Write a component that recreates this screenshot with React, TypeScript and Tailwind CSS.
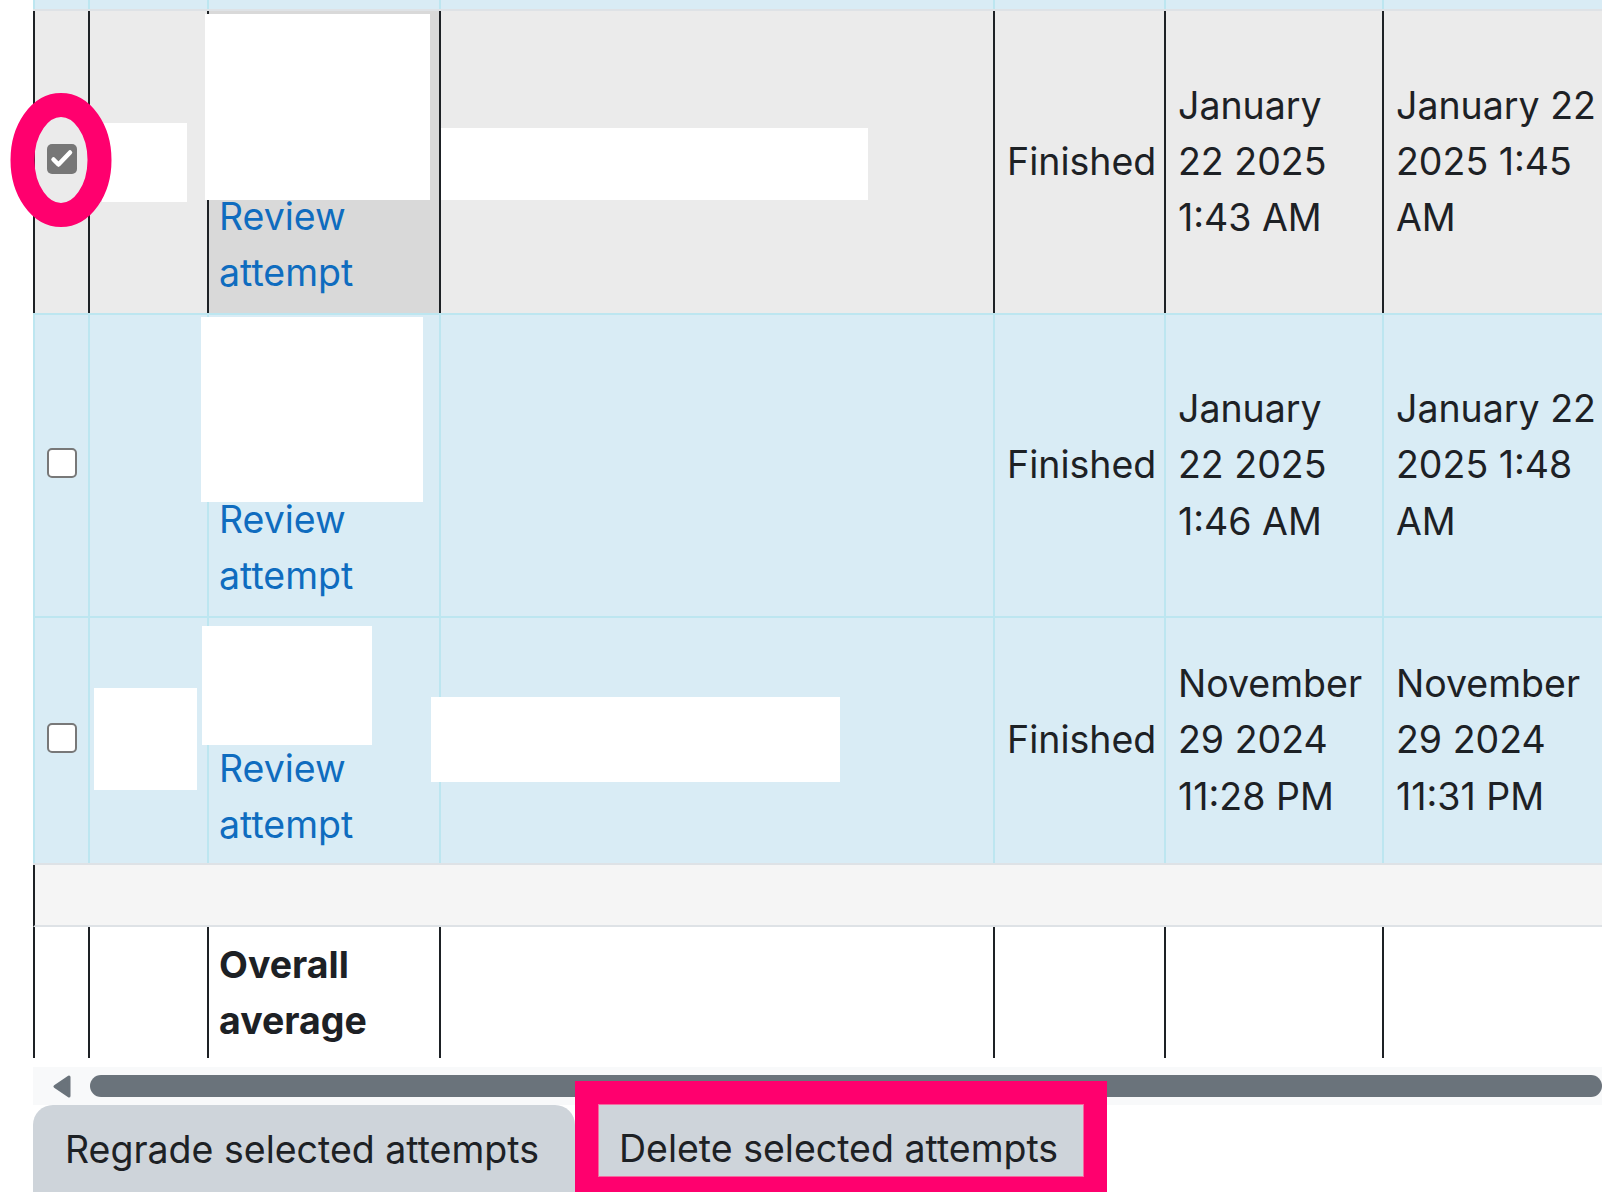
import React from 'react';

// column widths measured from the attempts table (zoomed Moodle page)
const COLS = ['w-[55px]', 'w-[119px]', 'w-[232px]', 'w-[554px]', 'w-[171px]', 'w-[218px]', 'flex-1'];

interface Attempt {
  checked: boolean;
  started: string[];
  finished: string[];
}

const attempts: Attempt[] = [
  { checked: true, started: ['January', '22 2025', '1:43 AM'], finished: ['January 22', '2025 1:45', 'AM'] },
  { checked: false, started: ['January', '22 2025', '1:46 AM'], finished: ['January 22', '2025 1:48', 'AM'] },
  { checked: false, started: ['November', '29 2024', '11:28 PM'], finished: ['November', '29 2024', '11:31 PM'] },
];

// white redaction blocks laid over the screenshot
const redactions = [
  'left-[102px] top-[123px] w-[85px] h-[79px]',
  'left-[205px] top-[14px] w-[225px] h-[186px]',
  'left-[441px] top-[128px] w-[427px] h-[72px]',
  'left-[201px] top-[317px] w-[222px] h-[185px]',
  'left-[94px] top-[688px] w-[103px] h-[102px]',
  'left-[202px] top-[626px] w-[170px] h-[119px]',
  'left-[431px] top-[697px] w-[409px] h-[85px]',
];

const Lines = ({ lines }: { lines: string[] }) => (
  <span>
    {lines.map((l, i) => (
      <React.Fragment key={i}>
        {l}
        {i < lines.length - 1 && <br />}
      </React.Fragment>
    ))}
  </span>
);

const Checkbox = ({ checked }: { checked: boolean }) =>
  checked ? (
    <div className="-mt-[6px] flex h-[30px] w-[30px] items-center justify-center rounded-[5px] bg-[#777777]">
      <svg width="30" height="30" viewBox="0 0 30 30">
        <path d="M6.5 15.5 L11.5 20.5 L23 8.5" fill="none" stroke="white" strokeWidth="4.5" strokeLinecap="round" strokeLinejoin="round" />
      </svg>
    </div>
  ) : (
    <div className="-mt-[6px] h-[30px] w-[30px] rounded-[5px] border-[2.5px] border-[#787878] bg-white" />
  );

export default function App() {
  return (
    <div className="relative h-[1192px] w-[1602px] overflow-hidden bg-white font-['Inter',sans-serif] text-[37.5px] leading-[56.25px] text-[#1d2125]">
      <div className="ml-[33px] flex flex-col">
        {/* header tail */}
        <div className="flex h-[11px] border-b-2 border-[#dee2e6] bg-[#d9ecf5]">
          {COLS.map((w, i) => (
            <div key={i} className={`${w} border-l-2 border-[#bde6f0]`} />
          ))}
        </div>

        {attempts.map((a, r) => {
          const sel = a.checked;
          const rowCls = sel
            ? 'h-[304px] bg-[#ebebeb] border-[#bde6f0]'
            : r === 1
              ? 'h-[303px] bg-[#d9ecf5] border-[#bde6f0]'
              : 'h-[247px] bg-[#d9ecf5] border-[#dee2e6]';
          const cell = sel ? 'border-l-2 border-[#1d2125]' : 'border-l-2 border-[#bde6f0]';
          return (
            <div key={r} className={`flex border-b-2 ${rowCls}`}>
              <div className={`${COLS[0]} ${cell} flex items-center justify-center`}>
                <Checkbox checked={a.checked} />
              </div>
              <div className={`${COLS[1]} ${cell}`} />
              <div className={`${COLS[2]} ${cell} flex flex-col justify-end pl-[10px] ${r === 2 ? 'pb-[10px]' : 'pb-3'} ${sel ? 'bg-[#d9d9d9]' : ''}`}>
                <a className="text-[#0f6cbf]">
                  Review
                  <br />
                  attempt
                </a>
              </div>
              <div className={`${COLS[3]} ${cell}`} />
              <div className={`${COLS[4]} ${cell} flex items-center pl-3`}>Finished</div>
              <div className={`${COLS[5]} ${cell} flex items-center pl-3`}>
                <Lines lines={a.started} />
              </div>
              <div className={`${COLS[6]} ${cell} flex items-center pl-3 whitespace-nowrap`}>
                <Lines lines={a.finished} />
              </div>
            </div>
          );
        })}

        {/* empty spacer row */}
        <div className="h-[62px] border-b-2 border-l-2 border-b-[#dee2e6] border-l-[#1d2125] bg-[#f5f5f5]" />

        {/* overall average */}
        <div className="flex h-[131px]">
          {COLS.map((w, i) => (
            <div key={i} className={`${w} border-l-2 border-[#1d2125] ${i === 2 ? 'pl-[10px] pt-[10px] font-bold' : ''}`}>
              {i === 2 && (
                <>
                  Overall
                  <br />
                  average
                </>
              )}
            </div>
          ))}
        </div>

        <div className="h-[9px]" />

        {/* horizontal scrollbar */}
        <div className="flex h-[38px] items-center gap-[19px] bg-[#f8f9fa] pl-[20px]">
          <svg width="18" height="23" viewBox="0 0 18 23">
            <path d="M2 11.5 L16 2 L16 21 Z" fill="#6a737b" stroke="#6a737b" strokeWidth="3" strokeLinejoin="round" />
          </svg>
          <div className="h-[22px] flex-1 rounded-full bg-[#6a737b]" />
        </div>

        {/* actions */}
        <div className="flex items-start">
          <div className="h-[120px] w-[542px] shrink-0 whitespace-nowrap rounded-[20px] bg-[#ced4da] pl-[32px] pt-[17px]">
            Regrade selected attempts
          </div>
          <div className="-mt-[24px] shrink-0 bg-[#ff006e] px-[23px] pt-[23px] pb-[15px]">
            <div className="h-[73px] w-[486px] whitespace-nowrap border border-[#f36a9f] bg-[#ced4da] pl-[20px] pt-[16px]">
              Delete selected attempts
            </div>
          </div>
        </div>
      </div>

      {redactions.map((r, i) => (
        <div key={i} className={`absolute bg-white ${r}`} />
      ))}

      {/* highlight ring round the ticked box */}
      <svg className="absolute left-0 top-[80px]" width="130" height="160" viewBox="0 0 130 160">
        <ellipse cx="61" cy="80" rx="38.5" ry="55" fill="none" stroke="#ff006e" strokeWidth="24" />
      </svg>
    </div>
  );
}
